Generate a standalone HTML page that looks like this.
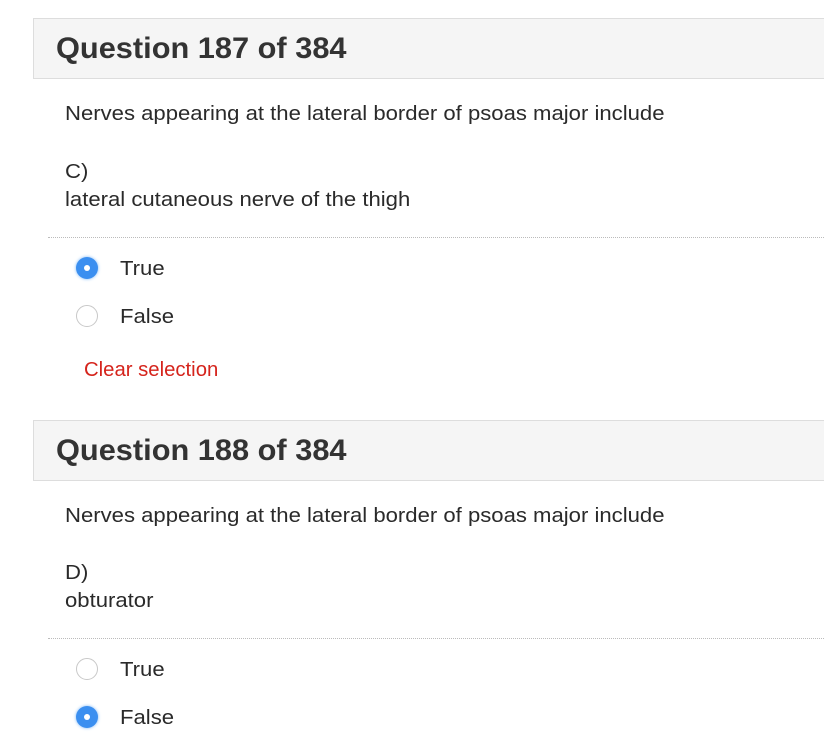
<!DOCTYPE html>
<html><head><meta charset="utf-8"><style>
html,body{margin:0;padding:0;background:#fff;width:824px;height:752px;overflow:hidden;position:relative;font-family:"Liberation Sans",Arial,sans-serif;color:#333}
.a{position:absolute;white-space:nowrap;transform-origin:0 50%}
.hd{position:absolute;left:33px;width:800px;height:61px;background:#f5f5f5;border:1px solid #ddd;box-sizing:border-box}
.hd span{position:absolute;left:22px;top:13px;font-size:30px;font-weight:bold;color:#333;transform:scaleX(1.025);transform-origin:0 50%;white-space:nowrap}
.t{font-size:20px;color:#2a2a2a;line-height:24px;transform:scaleX(1.105)}
.line{position:absolute;left:48px;width:780px;border-top:1px dotted #bbb}
.r{position:absolute;width:22px;height:22px;border-radius:50%;box-sizing:border-box;border:1px solid #c8c8c8;background:#fff}
.r.on{border:none;background:#3b8ff0;box-shadow:0 0 3px #7ab6f7}
.r.on::after{content:"";position:absolute;left:8px;top:8px;width:6px;height:6px;border-radius:50%;background:#fff}
.red{font-size:20px;color:#d5241c;transform:scaleX(1.015)}
</style></head><body>
<div class="hd" style="top:18px"><span>Question 187 of 384</span></div>
<div class="a t" style="left:65px;top:102px">Nerves appearing at the lateral border of psoas major include</div>
<div class="a t" style="left:65px;top:160px">C)</div>
<div class="a t" style="left:65px;top:188px">lateral cutaneous nerve of the thigh</div>
<div class="line" style="top:237px"></div>
<div class="r on" style="left:76px;top:257px"></div>
<div class="a t" style="left:120px;top:257px">True</div>
<div class="r" style="left:76px;top:305px"></div>
<div class="a t" style="left:120px;top:305px">False</div>
<div class="a red" style="left:84px;top:359px">Clear selection</div>

<div class="hd" style="top:420px"><span>Question 188 of 384</span></div>
<div class="a t" style="left:65px;top:504px">Nerves appearing at the lateral border of psoas major include</div>
<div class="a t" style="left:65px;top:561px">D)</div>
<div class="a t" style="left:65px;top:589px">obturator</div>
<div class="line" style="top:638px"></div>
<div class="r" style="left:76px;top:658px"></div>
<div class="a t" style="left:120px;top:658px">True</div>
<div class="r on" style="left:76px;top:706px"></div>
<div class="a t" style="left:120px;top:706px">False</div>
</body></html>
